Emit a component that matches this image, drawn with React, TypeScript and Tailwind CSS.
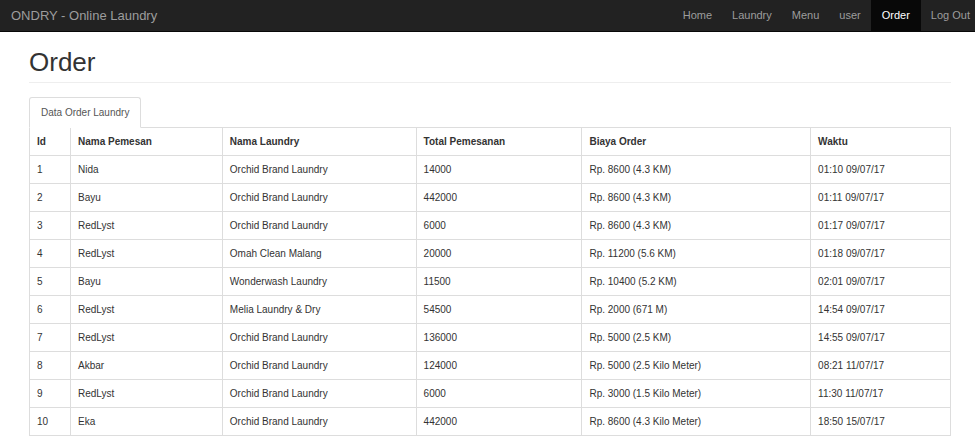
const orders = [
  ["1", "Nida", "Orchid Brand Laundry", "14000", "Rp. 8600 (4.3 KM)", "01:10 09/07/17"],
  ["2", "Bayu", "Orchid Brand Laundry", "442000", "Rp. 8600 (4.3 KM)", "01:11 09/07/17"],
  ["3", "RedLyst", "Orchid Brand Laundry", "6000", "Rp. 8600 (4.3 KM)", "01:17 09/07/17"],
  ["4", "RedLyst", "Omah Clean Malang", "20000", "Rp. 11200 (5.6 KM)", "01:18 09/07/17"],
  ["5", "Bayu", "Wonderwash Laundry", "11500", "Rp. 10400 (5.2 KM)", "02:01 09/07/17"],
  ["6", "RedLyst", "Melia Laundry & Dry", "54500", "Rp. 2000 (671 M)", "14:54 09/07/17"],
  ["7", "RedLyst", "Orchid Brand Laundry", "136000", "Rp. 5000 (2.5 KM)", "14:55 09/07/17"],
  ["8", "Akbar", "Orchid Brand Laundry", "124000", "Rp. 5000 (2.5 Kilo Meter)", "08:21 11/07/17"],
  ["9", "RedLyst", "Orchid Brand Laundry", "6000", "Rp. 3000 (1.5 Kilo Meter)", "11:30 11/07/17"],
  ["10", "Eka", "Orchid Brand Laundry", "442000", "Rp. 8600 (4.3 Kilo Meter)", "18:50 15/07/17"],
];

const headers = ["Id", "Nama Pemesan", "Nama Laundry", "Total Pemesanan", "Biaya Order", "Waktu"];
const widths = ["w-[41px]", "w-[152px]", "w-[194px]", "w-[166px]", "w-[229px]", "w-[140px]"];

const navItems = ["Home", "Laundry", "Menu", "user", "Order", "Log Out"];

export default function App() {
  return (
    <div className="h-[436px] overflow-hidden bg-white font-['Liberation_Sans',Arial,sans-serif] text-[#333]">
      <nav className="flex h-[32px] items-stretch justify-between overflow-hidden border-b border-[#080808] bg-[#222]">
        <a className="flex items-center pl-[11px] text-[13px] text-[#9d9d9d]">ONDRY - Online Laundry</a>
        <ul className="-mr-[5px] flex items-stretch">
          {navItems.map((item) => (
            <li
              key={item}
              className={
                item === "Order"
                  ? "flex items-center bg-[#080808] px-[11px] text-[11px] text-white"
                  : "flex items-center px-[10px] text-[11px] text-[#9d9d9d]"
              }
            >
              {item}
            </li>
          ))}
        </ul>
      </nav>

      <div className="pl-[29px] pr-[24px]">
        <div className="border-b border-[#eee] pt-[17px] pb-[6px]">
          <h1 className="text-[26px] leading-[27px] text-[#333]">Order</h1>
        </div>

        <div className="mt-[14px] flex border-b border-[#ddd]">
          <div className="-mb-px flex h-[31px] items-center rounded-t-[3px] border border-[#ddd] border-b-white bg-white px-[11px] text-[10px] text-[#555]">
            Data Order Laundry
          </div>
        </div>

        <table className="-mt-px w-[922px] border-collapse text-[10px]">
          <thead>
            <tr>
              {headers.map((h, i) => (
                <th
                  key={h}
                  className={`${widths[i]} h-[28px] border border-[#ddd] px-[7px] text-left align-middle font-bold`}
                >
                  {h}
                </th>
              ))}
            </tr>
          </thead>
          <tbody>
            {orders.map((row) => (
              <tr key={row[0]}>
                {row.map((cell, i) => (
                  <td key={i} className="h-[28px] border border-[#ddd] px-[7px] align-middle">
                    {cell}
                  </td>
                ))}
              </tr>
            ))}
            <tr>
              {headers.map((h) => (
                <td key={h} className="h-[28px] border border-[#ddd] px-[7px]" />
              ))}
            </tr>
          </tbody>
        </table>
      </div>
    </div>
  );
}
